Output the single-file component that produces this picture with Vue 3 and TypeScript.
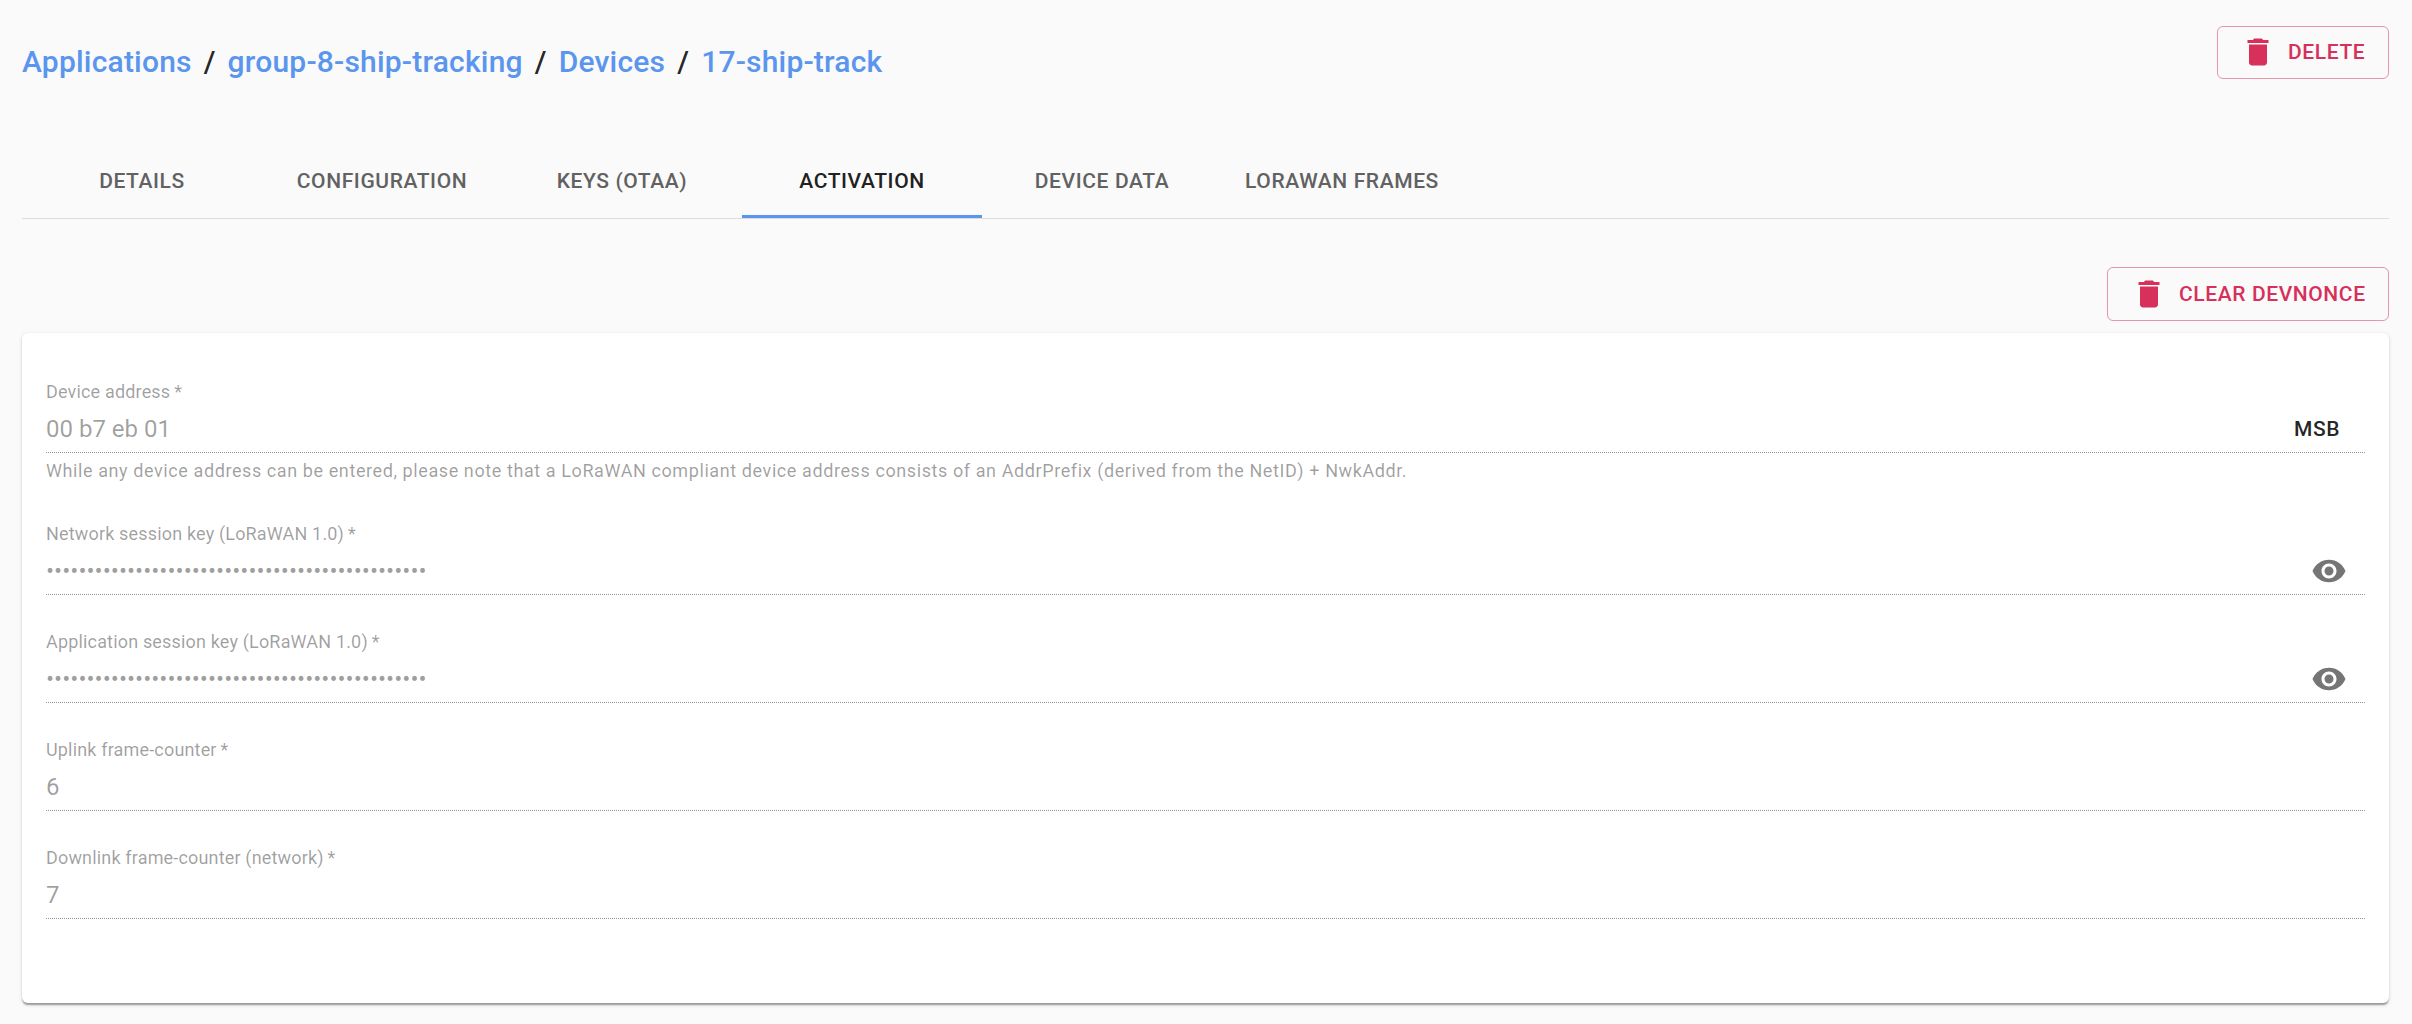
<script setup lang="ts">
interface Crumb {
  label: string
}

interface Field {
  id: string
  label: string
  value: string
  type: 'text' | 'password'
  helper?: string
  action?: 'msb' | 'eye'
}

const crumbs: Crumb[] = [
  { label: 'Applications' },
  { label: 'group-8-ship-tracking' },
  { label: 'Devices' },
  { label: '17-ship-track' },
]

const tabs: string[] = ['Details', 'Configuration', 'Keys (OTAA)', 'Activation', 'Device data', 'LoRaWAN frames']
const activeTab = 'Activation'

const hiddenKey = '0'.repeat(47)

const fields: Field[] = [
  {
    id: 'devAddr',
    label: 'Device address',
    value: '00 b7 eb 01',
    type: 'text',
    helper:
      'While any device address can be entered, please note that a LoRaWAN compliant device address consists of an AddrPrefix (derived from the NetID) + NwkAddr.',
    action: 'msb',
  },
  { id: 'nwkSKey', label: 'Network session key (LoRaWAN 1.0)', value: hiddenKey, type: 'password', action: 'eye' },
  { id: 'appSKey', label: 'Application session key (LoRaWAN 1.0)', value: hiddenKey, type: 'password', action: 'eye' },
  { id: 'fCntUp', label: 'Uplink frame-counter', value: '6', type: 'text' },
  { id: 'fCntDown', label: 'Downlink frame-counter (network)', value: '7', type: 'text' },
]
</script>

<template>
  <main class="page">
    <header class="title-bar">
      <h1 class="breadcrumbs">
        <template v-for="(crumb, i) in crumbs" :key="crumb.label">
          <span v-if="i > 0" class="separator">/</span>
          <a class="crumb">{{ crumb.label }}</a>
        </template>
      </h1>
      <button class="outlined delete" type="button">
        <svg class="icon" viewBox="0 0 24 24"><path d="M6 19c0 1.1.9 2 2 2h8c1.1 0 2-.9 2-2V7H6v12zM19 4h-3.500l-1-1h-5l-1 1H5v2h14V4z" /></svg>
        <span>Delete</span>
      </button>
    </header>

    <nav class="tabs">
      <button v-for="tab in tabs" :key="tab" type="button" class="tab" :class="{ active: tab === activeTab }">
        {{ tab }}
      </button>
    </nav>

    <div class="toolbar">
      <button class="outlined clear" type="button">
        <svg class="icon" viewBox="0 0 24 24"><path d="M6 19c0 1.1.9 2 2 2h8c1.1 0 2-.9 2-2V7H6v12zM19 4h-3.500l-1-1h-5l-1 1H5v2h14V4z" /></svg>
        <span>Clear DevNonce</span>
      </button>
    </div>

    <form class="card">
      <div v-for="field in fields" :key="field.id" class="field">
        <label class="label" :for="field.id">{{ field.label }}<span>&#8201;*</span></label>
        <div class="control">
          <input :id="field.id" class="input" :type="field.type" :value="field.value" disabled />
          <button v-if="field.action === 'msb'" class="msb" type="button">MSB</button>
          <button v-else-if="field.action === 'eye'" class="eye" type="button" aria-label="Toggle visibility">
            <svg class="icon" viewBox="0 0 24 24"><path d="M12 4.500C7 4.500 2.730 7.610 1 12c1.730 4.390 6 7.500 11 7.500s9.270-3.110 11-7.500c-1.730-4.390-6-7.500-11-7.500zM12 17c-2.760 0-5-2.240-5-5s2.240-5 5-5 5 2.240 5 5-2.240 5-5 5zm0-8c-1.660 0-3 1.340-3 3s1.340 3 3 3 3-1.340 3-3-1.340-3-3-3z" /></svg>
          </button>
        </div>
        <p v-if="field.helper" class="helper">{{ field.helper }}</p>
      </div>
    </form>
  </main>
</template>

<style>
html,
body {
  margin: 0;
  background: #fafafa;
}
</style>

<style scoped>
.page {
  box-sizing: border-box;
  height: 1024px;
  padding: 26px 23px 0 22px;
  overflow: hidden;
  background: #fafafa;
  color: rgba(0, 0, 0, 0.87);
  font-family: Roboto, 'Liberation Sans', sans-serif;
}

button {
  margin: 0;
  border: 0;
  padding: 0;
  background: none;
  color: inherit;
  font: 500 21px/36px Roboto, 'Liberation Sans', sans-serif;
  letter-spacing: 0.6px;
  text-transform: uppercase;
  white-space: nowrap;
}

.icon {
  display: block;
  flex: none;
  width: 36px;
  height: 36px;
  fill: currentColor;
}

.title-bar {
  display: flex;
  justify-content: space-between;
  align-items: flex-start;
  height: 120px;
}

.breadcrumbs {
  display: flex;
  margin: 12px 0 0;
  font-size: 30px;
  font-weight: 500;
  line-height: 48px;
  letter-spacing: 0.2px;
}

.crumb {
  color: #5a95ee;
}

.separator {
  margin: 0 12px;
}

.outlined {
  display: flex;
  box-sizing: border-box;
  height: 53px;
  padding: 7px 23px 8px 22px;
  border: 1px solid rgba(214, 48, 91, 0.5);
  border-radius: 6px;
  gap: 12px;
  color: #d6305b;
}

.delete {
  width: 172px;
}

.clear {
  width: 282px;
  height: 54px;
  padding: 8px 23px 8px 23px;
}

.tabs {
  display: flex;
  height: 72px;
  border-bottom: 1px solid #dcdcdc;
}

.tab {
  box-sizing: border-box;
  width: 240px;
  border-bottom: 3px solid transparent;
  padding: 0;
  color: #616161;
}

.tab.active {
  border-bottom-color: #5a95ee;
  color: #212121;
}

.toolbar {
  display: flex;
  justify-content: flex-end;
  padding: 48px 0 12px;
}

.card {
  box-sizing: border-box;
  height: 670px;
  padding: 48px 24px 0;
  border-radius: 6px;
  background: #fff;
  box-shadow:
    0 3px 1.5px -1.5px rgba(0, 0, 0, 0.2),
    0 1.5px 1.5px 0 rgba(0, 0, 0, 0.14),
    0 1.5px 4.5px 0 rgba(0, 0, 0, 0.12);
}

.field {
  margin-bottom: 36px;
}

.label {
  display: block;
  height: 24px;
  color: rgba(0, 0, 0, 0.38);
  font-size: 18px;
  line-height: 22px;
  letter-spacing: 0.169px;
}

.control {
  display: flex;
  align-items: center;
  box-sizing: border-box;
  height: 48px;
  border-bottom: 1px dotted rgba(0, 0, 0, 0.42);
}

.input {
  flex: 1;
  min-width: 0;
  height: 28px;
  margin: 0;
  border: 0;
  padding: 0;
  background: none;
  color: rgba(0, 0, 0, 0.38);
  font: 400 24px/28px Roboto, 'Liberation Sans', sans-serif;
}

.msb {
  width: 96px;
}

.eye {
  padding: 0 18px;
  color: #757575;
}

.helper {
  height: 31px;
  margin: 3px 0 0;
  color: rgba(0, 0, 0, 0.38);
  font-size: 18px;
  line-height: 30px;
  letter-spacing: 0.591px;
}
</style>
